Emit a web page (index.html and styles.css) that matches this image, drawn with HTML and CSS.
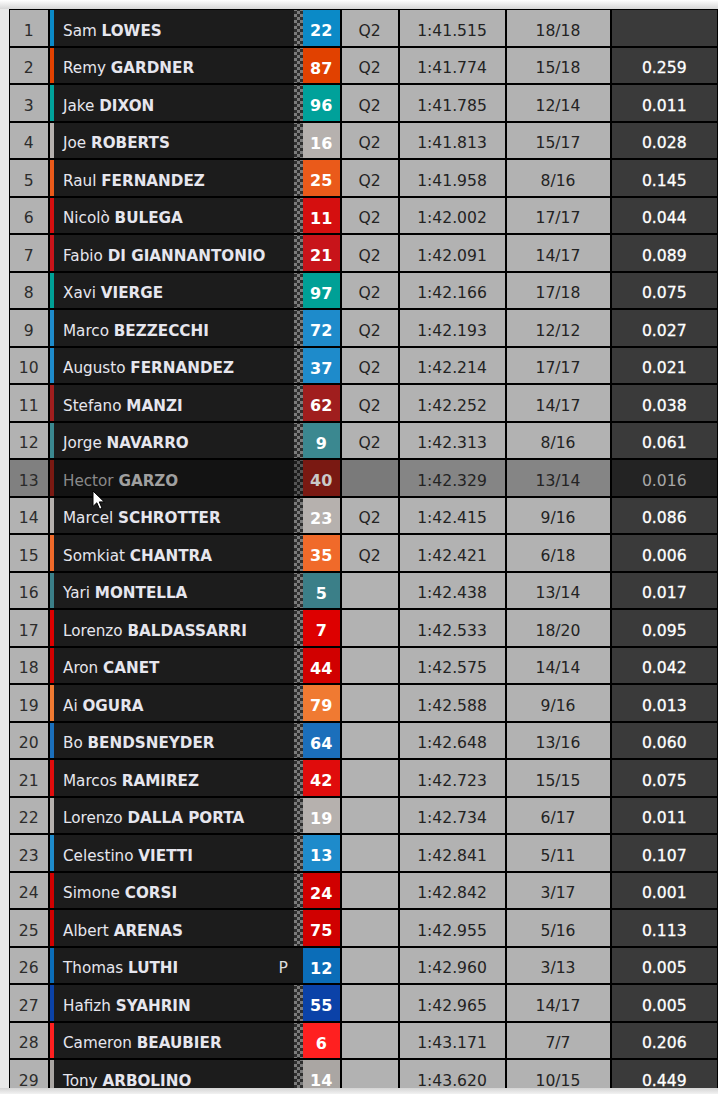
FILE: index.html
```html
<!DOCTYPE html>
<html>
<head>
<meta charset="utf-8">
<link rel="stylesheet" href="styles.css">
</head>
<body>
<div class="frame">
  <div class="table" id="table"></div>
  <svg class="cursor" width="14" height="21" viewBox="0 0 14 21"><path d="M1 1 L1 16.5 L4.8 12.8 L7.6 19.2 L10 18.2 L7.3 11.9 L12.3 11.9 Z" fill="#fff" stroke="#000" stroke-width="1" stroke-linejoin="round"/></svg>
</div>
<script src="app.js"></script>
</body>
</html>
```

FILE: app.js
```js
const rows = [
  [1,"Sam","LOWES",22,"#0b8ac7","Q2","1:41.515","18/18",""],
  [2,"Remy","GARDNER",87,"#e14100","Q2","1:41.774","15/18","0.259"],
  [3,"Jake","DIXON",96,"#00a19a","Q2","1:41.785","12/14","0.011"],
  [4,"Joe","ROBERTS",16,"#b6b1ae","Q2","1:41.813","15/17","0.028"],
  [5,"Raul","FERNANDEZ",25,"#ea5a1a","Q2","1:41.958","8/16","0.145"],
  [6,"Nicolò","BULEGA",11,"#d50f0f","Q2","1:42.002","17/17","0.044"],
  [7,"Fabio","DI GIANNANTONIO",21,"#c8141a","Q2","1:42.091","14/17","0.089"],
  [8,"Xavi","VIERGE",97,"#00a096","Q2","1:42.166","17/18","0.075"],
  [9,"Marco","BEZZECCHI",72,"#1e8bcb","Q2","1:42.193","12/12","0.027"],
  [10,"Augusto","FERNANDEZ",37,"#1e8bcb","Q2","1:42.214","17/17","0.021"],
  [11,"Stefano","MANZI",62,"#a01e1e","Q2","1:42.252","14/17","0.038"],
  [12,"Jorge","NAVARRO",9,"#3b8890","Q2","1:42.313","8/16","0.061"],
  [13,"Hector","GARZO",40,"#7a1912","","1:42.329","13/14","0.016","hover"],
  [14,"Marcel","SCHROTTER",23,"#b6b1ae","Q2","1:42.415","9/16","0.086"],
  [15,"Somkiat","CHANTRA",35,"#f06a2a","Q2","1:42.421","6/18","0.006"],
  [16,"Yari","MONTELLA",5,"#3b7f88","","1:42.438","13/14","0.017"],
  [17,"Lorenzo","BALDASSARRI",7,"#dd0000","","1:42.533","18/20","0.095"],
  [18,"Aron","CANET",44,"#d10000","","1:42.575","14/14","0.042"],
  [19,"Ai","OGURA",79,"#f07a32","","1:42.588","9/16","0.013"],
  [20,"Bo","BENDSNEYDER",64,"#1b6fbb","","1:42.648","13/16","0.060"],
  [21,"Marcos","RAMIREZ",42,"#e00c0c","","1:42.723","15/15","0.075"],
  [22,"Lorenzo","DALLA PORTA",19,"#b6b1ae","","1:42.734","6/17","0.011"],
  [23,"Celestino","VIETTI",13,"#1e8bcb","","1:42.841","5/11","0.107"],
  [24,"Simone","CORSI",24,"#d00000","","1:42.842","3/17","0.001"],
  [25,"Albert","ARENAS",75,"#d00000","","1:42.955","5/16","0.113"],
  [26,"Thomas","LUTHI",12,"#0b6db8","","1:42.960","3/13","0.005","pit"],
  [27,"Hafizh","SYAHRIN",55,"#0b42a8","","1:42.965","14/17","0.005"],
  [28,"Cameron","BEAUBIER",6,"#ff2020","","1:43.171","7/7","0.206"],
  [29,"Tony","ARBOLINO",14,"#aaa6a3","","1:43.620","10/15","0.449"]
];
const t = document.getElementById('table');
for (const r of rows) {
  const [pos, first, last, num, color, sess, time, laps, gap, flag] = r;
  const row = document.createElement('div');
  row.className = 'row' + (flag === 'hover' ? ' hover' : '');
  const mark = flag === 'pit' ? '<span class="pit">P</span>' : '<span class="checker"></span>';
  row.innerHTML =
    `<div class="cell pos">${pos}</div>` +
    `<div class="rider" style="--team:${color}">` +
      `<span class="stripe"></span>` +
      `<span class="name">${first} <b>${last}</b></span>` +
      mark +
      `<span class="num">${num}</span>` +
    `</div>` +
    `<div class="cell light">${sess}</div>` +
    `<div class="cell light">${time}</div>` +
    `<div class="cell light">${laps}</div>` +
    `<div class="cell gap">${gap}</div>`;
  t.appendChild(row);
}
```

FILE: styles.css
```css
html, body {
  margin: 0;
  padding: 0;
}
body {
  background: #e9e9e9;
  font-family: "DejaVu Sans", "Liberation Sans", sans-serif;
}
.frame {
  position: relative;
  height: 1094px;
  overflow: hidden;
  box-sizing: border-box;
  padding: 9px 0 0 9px;
  background: linear-gradient(to bottom, #ffffff 0, #d6d6d6 9px, #e9e9e9 9px);
}
.frame::after {
  content: "";
  position: absolute;
  left: 0;
  right: 0;
  bottom: 0;
  height: 6px;
  background: linear-gradient(to bottom, #d4d4d4, #f2f2f2);
}
.table {
  background: #000;
  padding: 1px;
  display: flex;
  flex-direction: column;
  gap: 2px;
  width: 709px;
  box-sizing: border-box;
}
.row {
  display: grid;
  grid-template-columns: 37.5px 290px 56px 105px 103px 1fr;
  column-gap: 2px;
  height: 35.5px;
}
.cell {
  display: flex;
  align-items: center;
  justify-content: center;
  padding-top: 6px;
  box-sizing: border-box;
  font-size: 15.6px;
  color: #232323;
}
.pos, .light {
  background: #b2b2b2;
}
.pos {
  color: #2c2c2c;
}
.gap {
  background: #3a3a3a;
  color: #fff;
  -webkit-text-stroke: 0.3px #fff;
}
.rider {
  display: flex;
  align-items: stretch;
  background: #1c1c1c;
}
.stripe {
  width: 4px;
  background: var(--team);
}
.name {
  flex: 1;
  display: flex;
  align-items: center;
  padding: 6px 0 0 9.5px;
  font-size: 15.2px;
  color: #e6e6ee;
  white-space: pre;
}
.name b {
  font-weight: bold;
}
.checker {
  width: 9px;
  background-color: #2e2e2e;
  background-image: conic-gradient(#7c7c7c 25%, transparent 0 50%, #7c7c7c 0 75%, transparent 0);
  background-size: 6px 6px;
  background-position: 0 1px;
}
.pit {
  display: flex;
  align-items: center;
  padding: 6px 15px 0 0;
  font-size: 15.6px;
  color: #dcdcdc;
}
.num {
  width: 36.5px;
  display: flex;
  align-items: center;
  justify-content: center;
  padding-top: 6px;
  box-sizing: border-box;
  background: var(--team);
  color: #fff;
  font-weight: bold;
  font-size: 16px;
}
.row.hover .pos { background: #808080; color: #2a2a2a; }
.row.hover .rider { background: #131313; }
.row.hover .name { color: #8a8a8a; }
.row.hover .name b { color: #a0a0a0; }
.row.hover .checker { background-color: #1c1c1c; background-image: conic-gradient(#555 25%, transparent 0 50%, #555 0 75%, transparent 0); }
.row.hover .num { color: #c9c9c9; }
.row.hover .light { background: #858585; }
.row.hover .light:nth-child(3) { background: #7a7a7a; }
.row.hover .gap { background: #232323; color: #a8a8a8; -webkit-text-stroke: 0; }
.cursor {
  position: absolute;
  left: 92px;
  top: 490px;
}
```
